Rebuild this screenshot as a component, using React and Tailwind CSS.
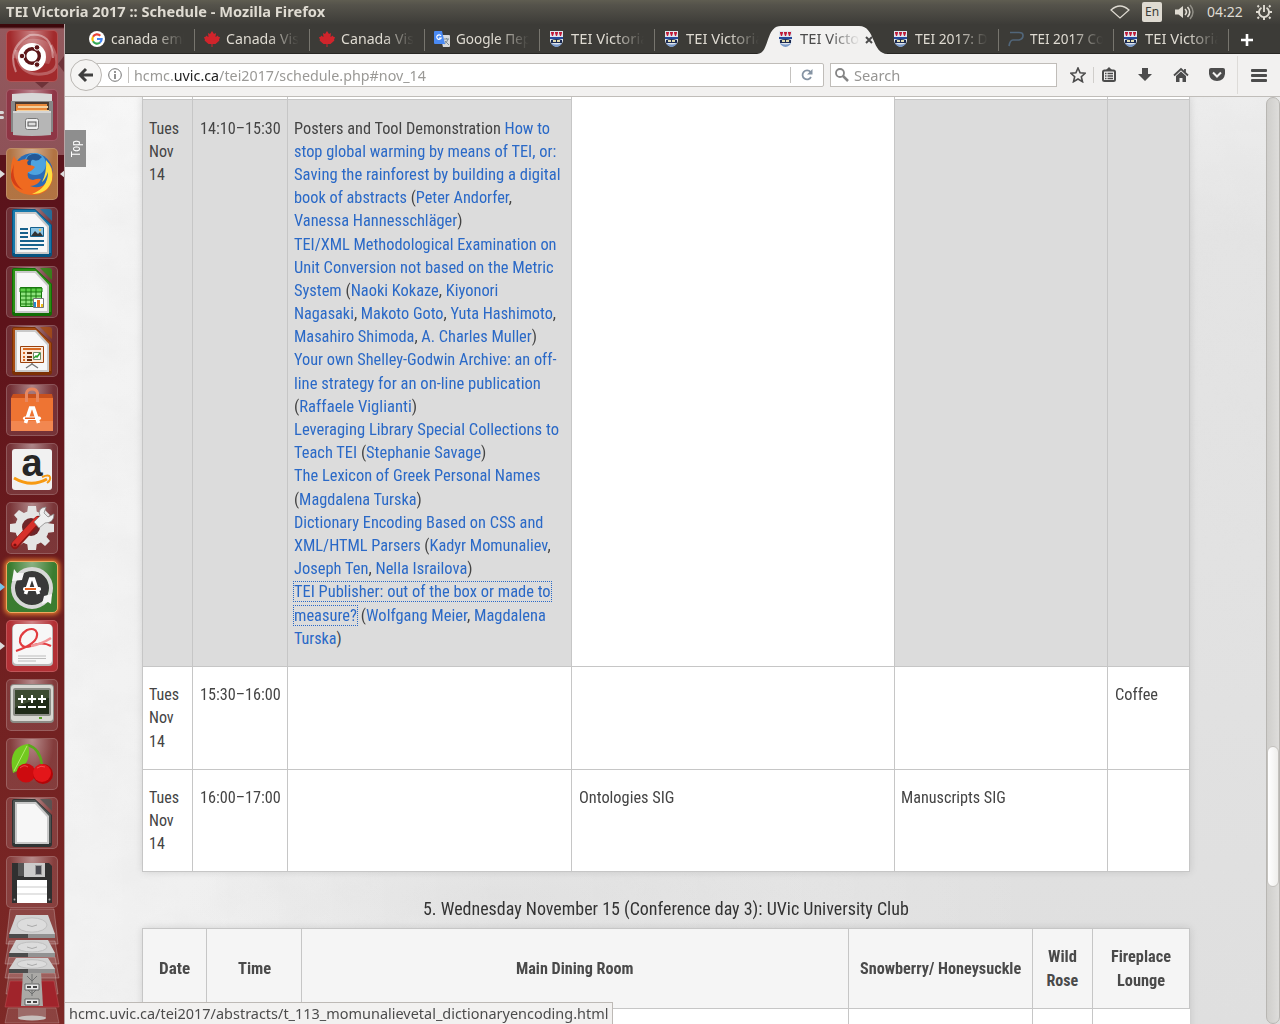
import React, { useLayoutEffect, useRef, useState } from "react";

/* Sets a run of text on one line at a given width. */
function Fit({ w, className = "", children }) {
  const ref = useRef(null);
  const [k, setK] = useState(1);
  useLayoutEffect(() => {
    const n = ref.current.offsetWidth;
    if (n) setK(w / n);
  }, [w]);
  return (
    <span className={"inline-block whitespace-nowrap " + className} style={{ width: w }}>
      <span ref={ref} className="inline-block origin-left" style={{ transform: `scaleX(${k})` }}>
        {children}
      </span>
    </span>
  );
}

/* ---------- launcher ---------- */

function Tile({ tone = "bg-[#ffffff]/10", left, right, glow, children }) {
  return (
    <div className="relative mx-auto h-[52px] w-[52px] shrink-0">
      <div
        className={
          "h-[52px] w-[52px] overflow-hidden rounded-[5px] border " + tone +
          (glow ? " border-[#f0a860] shadow-[0_0_4px_2px_#d9742e]" : " border-[#ffffff]/20")
        }
      >
        <div className="h-full w-full bg-[radial-gradient(ellipse_at_50%_0%,rgba(255,255,255,0.42),rgba(255,255,255,0.02)_62%)]">
          <svg viewBox="1 1 50 50" className="block h-[50px] w-[50px]">{children}</svg>
        </div>
      </div>
      {left && <div className={"absolute top-[22px] -left-[6px] border-y-[4px] border-l-[5px] border-y-transparent " + left} />}
      {right && <div className="absolute top-[22px] -right-[7px] border-y-[4px] border-r-[5px] border-y-transparent border-r-[#dddddd]" />}
    </div>
  );
}

function DocShape({ c, dark, children }) {
  return (
    <g>
      <path d="M6 4q0-2 2-2H29L46 18V47q0 3-3 3H9q-3 0-3-3z" fill={dark} />
      <path d="M7 4q0-1 2-1H29L45 18V46H7z" fill={c} />
      <path d="M34 2H43q3 0 3 3V14z" fill={c} opacity=".8" />
      <path d="M9 5H30L43 19V47H9z" fill="#c9c9c9" />
      <path d="M11 7H29L41 20V45H11z" fill="#f7f7f7" />
      {children}
    </g>
  );
}

function Launcher() {
  return (
    <aside className="flex h-[1000px] w-16 shrink-0 flex-col overflow-hidden bg-[linear-gradient(180deg,#3c070b_0px,#3c070b_3px,#935a5e_5px,#8e5258_131px,#5a131b_131px,#5d131a_300px,#6f1f20_600px,#7d2926_1000px)] pt-[6px]">
      <div className="flex flex-col gap-[7px]">
        <div className="relative">
          <div className="absolute top-[26px] right-0 border-y-[8px] border-r-[6px] border-y-transparent border-r-[#6e3339]" />
          <div className="absolute top-[52px] left-[35px] border-x-[7px] border-t-[6px] border-x-transparent border-t-[#6e3339]" />
          <Tile tone="bg-[#a02628]">
            <path d="M10 42Q0 18 24 5Q46 2 47 28" fill="none" stroke="#fff" strokeOpacity=".4" strokeWidth="2" />
            <path d="M7 28Q10 6 32 9T43 34" fill="#fff" opacity=".18" />
            <path d="M10 20Q12 46 36 44T45 15" fill="none" stroke="#fff" strokeOpacity=".25" strokeWidth="3" />
            <circle cx="26" cy="27" r="14" fill="#fff" />
            <circle cx="26" cy="26" r="7.3" fill="none" stroke="#5c1518" strokeWidth="3.4" />
            <g fill="#5c1518" stroke="#fff" strokeWidth="1">
              <circle cx="16" cy="26" r="2.8" /><circle cx="31" cy="17.4" r="2.8" /><circle cx="31" cy="34.6" r="2.8" />
            </g>
          </Tile>
        </div>
        <div className="relative">
          <div className="absolute top-[22px] left-0 flex flex-col gap-[2px]">
            <i className="block h-[3px] w-1 rounded-r bg-[#d8d8d8]" /><i className="block h-[3px] w-1 rounded-r bg-[#d8d8d8]" />
          </div>
          <Tile tone="bg-[#8a2438]/70">
            <path d="M6 5q20-2 40 0V17H6z" fill="#d8d8d8" /><path d="M5 12H47V43H5z" fill="#878787" />
            <path d="M9 13H43V24H9z" fill="#4b3a30" /><path d="M10 15H41V24H10z" fill="#e8883a" />
            <path d="M12 17H42V19H12zM11 21H43V23H11z" fill="#f4cf9c" />
            <path d="M7 22H45V46q-19 2-38 0z" fill="#b6b6b6" /><path d="M7 22H45V24H7z" fill="#d5d5d5" />
            <rect x="19.500" y="29.500" width="13" height="11" rx="2" fill="#eee" stroke="#777" />
            <rect x="22" y="33" width="8" height="4" fill="#ddd" stroke="#555" />
          </Tile>
        </div>
        <Tile tone="bg-[#b0713f]" left="border-l-[#dddddd]" right>
          <circle cx="27" cy="25" r="20" fill="#2b6cb5" />
          <circle cx="29" cy="16" r="11" fill="#4da3e0" />
          <path d="M22 8q8-5 14 1-4 5-8 3t-3 7q-5 0-6-5z" fill="#225796" />
          <path d="M8 8q2 5 5 5 5-3 10-1-3 2-1 5 5 0 7 2-4 5-7 5-2 7 5 8 5-2 8-1-3 7-11 7 12 4 17-5 5-8 2-18 6 9 3 18-4 14-20 14Q6 46 5 29 4 15 8 8z" fill="#ef6a20" />
          <path d="M40 12q8 8 6 20-4 14-20 14 16-6 16-22-3 8-6 10 5-10 4-22z" fill="#ffdf3f" />
          <path d="M8 16q-3 17 9 26Q4 37 5 26z" fill="#d33f17" />
        </Tile>
        <Tile>
          <DocShape c="#1678ab" dark="#075380">
            <path d="M14 21h8v2h-8zM14 25h8v2h-8zM14 29h8v2h-8zM14 33h24v2H14zM14 37h24v2H14zM14 41h18v1.500H14z" fill="#17618c" />
            <path d="M24.500 20.500h13v9h-13z" fill="#8cc6e6" stroke="#17618c" /><path d="M25 29l4-5 3 3 2-2 3 4z" fill="#333" />
            <circle cx="34" cy="23" r="1.200" fill="#f6c24a" />
          </DocShape>
        </Tile>
        <Tile>
          <DocShape c="#2b8f13" dark="#116d05">
            <path d="M14.500 21.500h21v19h-21z" fill="#8fe37e" stroke="#17790c" />
            <path d="M14 22h22v4H14zM14 30h22M14 34h22M14 38h22M20 21v20M25 21v20M30 21v20" fill="#5ed049" stroke="#17790c" />
            <path d="M27.500 32.500h10v9h-10z" fill="#fff" stroke="#777" />
            <path d="M28 36h2v5h-2z" fill="#2188ce" /><path d="M31 34h3v7h-3z" fill="#e0701c" /><path d="M35 38h2v3h-2z" fill="#f1c21c" />
          </DocShape>
        </Tile>
        <Tile>
          <DocShape c="#a64c13" dark="#7c3004">
            <path d="M14.500 21.500h23v16h-23z" fill="#fbe9d8" stroke="#9c420d" />
            <path d="M17 23h18v2H17z" fill="#d86a22" /><path d="M17 27h2v2h-2zM17 31h2v2h-2zM17 34h2v2h-2z" fill="#d86a22" />
            <path d="M21 27h5v2h-5zM21 31h5v2h-5zM21 34h5v2h-5z" fill="#70300c" />
            <path d="M27.500 27.500h7v7h-7z" fill="#fff" stroke="#6a8a6a" /><path d="M28 33l2-2 1 1 3-4" fill="none" stroke="#27a02a" strokeWidth="1.500" />
            <path d="M26 38v2M26 39l-6 4M26 39l6 4" stroke="#777" strokeWidth="1.500" />
          </DocShape>
        </Tile>
        <Tile>
          <path d="M7 10H46L47 14V47H5V14z" fill="#c8501d" /><path d="M5 14H47V47H5z" fill="#ee7433" />
          <path d="M5 37H47V47H5z" fill="#f28750" />
          <path d="M20.500 18V9q1-4 5.500-4t5.500 4v9" fill="none" stroke="#e8875f" strokeWidth="3" />
          <path d="M19.500 39L24.500 24h3l5 15" fill="none" stroke="#fff" strokeWidth="3.600" />
          <rect x="17" y="32.500" width="18" height="3.500" rx="1.700" fill="#fff" /><path d="M19 34.300h10" stroke="#e56020" strokeWidth="1.500" />
        </Tile>
        <Tile>
          <rect x="6" y="6" width="40" height="41" rx="3" fill="#f1f1f1" />
          <text x="26" y="33" textAnchor="middle" fontFamily="Liberation Sans, sans-serif" fontWeight="700" fontSize="38" fill="#262626">a</text>
          <path d="M8 35q17 10 33 1" fill="none" stroke="#f79a12" strokeWidth="3" /><path d="M36 34q7-3 8 0t-3 6" fill="none" stroke="#f79a12" strokeWidth="2" />
        </Tile>
        <Tile>
          <g fill="#e4e4e4"><circle cx="26" cy="26" r="17" />
            <path d="M22 4h8l1 8H21zM22 48h8l1-8H21zM4 22v8l8 1V21zM48 22v8l-8 1V21zM8 13l5-5 8 5-7 7zM44 39l-5 5-7-6 6-6zM8 39l5 5 8-6-7-6zM44 13l-5-5-8 6 6 6z" /></g>
          <circle cx="25" cy="25" r="9" fill="#6d2529" />
          <path d="M9 43L32 18" stroke="#8f1715" strokeWidth="8" strokeLinecap="round" /><path d="M9 42L31 18" stroke="#d7302b" strokeWidth="6" strokeLinecap="round" />
          <circle cx="9" cy="43" r="1.600" fill="#761010" />
          <path d="M28 20l6-6q-3-8 6-9l-2 6 4 4 6-3q0 9-9 9l-6 5z" fill="#efefef" stroke="#8c8c8c" strokeWidth=".8" />
        </Tile>
        <Tile tone="bg-[#377a2c]" left="border-l-[#76c3ec]" glow>
          <circle cx="26" cy="27" r="17" fill="#393939" />
          <circle cx="26" cy="27" r="19" fill="none" stroke="#d8d8d8" strokeWidth="4" />
          <path d="M6 20L8 8l3 4 7 0-2 7z" fill="#f5f5f5" /><path d="M46 33L45 43l-3-2-6 2 2-8z" fill="#f5f5f5" />
          <path d="M19.500 33L24.500 18h3l5 15" fill="none" stroke="#fff" strokeWidth="3.600" />
          <rect x="17" y="26" width="18" height="4" rx="1.700" fill="#fff" /><path d="M19 28h11" stroke="#e56020" strokeWidth="2" />
        </Tile>
        <Tile tone="bg-[#b12c31]" left="border-l-[#dddddd]">
          <rect x="6" y="5" width="41" height="41" rx="4" fill="#b9b9b9" /><rect x="7" y="4" width="39" height="40" rx="4" fill="#f7f7f7" />
          <path d="M10 31Q33 23 31 13Q29 7 21 10Q13 15 14 22Q16 29 25 26Q36 21 45 26" fill="none" stroke="#e13c40" strokeWidth="2.200" />
          <path d="M25 26q11-2 20-8" fill="none" stroke="#f2979a" strokeWidth="2.500" />
          <path d="M12 36h28M12 38.500h28M12 41h18" stroke="#bdbdbd" />
        </Tile>
        <Tile>
          <rect x="4" y="5" width="44" height="39" rx="4" fill="#8c8c86" /><rect x="5" y="6" width="42" height="36" rx="3" fill="#d8d8d2" />
          <rect x="7" y="9" width="38" height="28" rx="2" fill="#8b8d86" /><rect x="9" y="11" width="34" height="24" fill="#1f2b18" />
          <path d="M9 11h34v8q-17 1-34 10z" fill="#48593b" opacity=".7" />
          <path d="M12 20h8M16 16v8M22 20h8M26 16v8M32 20h8M36 16v8" stroke="#fff" strokeWidth="2" /><path d="M12 28h8M22 28h8M32 28h8" stroke="#fff" strokeWidth="2" />
          <path d="M33 39h3" stroke="#5aa329" strokeWidth="2" />
        </Tile>
        <Tile>
          <path d="M22 7q-8 7-2 22M22 7q13 4 14 22" fill="none" stroke="#5aa81c" strokeWidth="2.500" />
          <path d="M22 6Q1 9 7 35Q27 27 22 6z" fill="#72c91f" /><path d="M21 8L8 33" stroke="#b2ec6b" />
          <circle cx="20" cy="35" r="9.500" fill="#cd0b0f" /><circle cx="37" cy="36" r="10" fill="#b30508" /><circle cx="36" cy="35" r="9" fill="#e3161a" />
          <path d="M14 30q4-4 8-1M31 30q4-3 8-1" fill="none" stroke="#ff7474" strokeWidth="1" opacity=".6" />
        </Tile>
        <Tile><DocShape c="#505554" dark="#303434" /></Tile>
        <Tile>
          <path d="M6 7H43L46 10V47H6z" fill="#303030" /><path d="M18 7H39V21H18z" fill="#cbcbcb" />
          <path d="M12 7h6v13h-6z" fill="#555" /><path d="M29.500 9.500h6v9h-6z" fill="#47484f" stroke="#999" />
          <path d="M11 24H41V47H11z" fill="#fff" /><path d="M11 31h30M11 38h30" stroke="#c9c9c9" />
          <circle cx="8.500" cy="43.500" r="1" fill="#aaa" /><circle cx="43.500" cy="43.500" r="1" fill="#aaa" />
        </Tile>
      </div>
      <svg viewBox="0 908 64 116" className="block h-[116px] w-16 shrink-0">
        <g fill="#fff" fillOpacity=".14" stroke="#fff" strokeOpacity=".25">
          <path d="M10 909H54L58 944H6z" /><path d="M9 941H55L59 964H5z" /><path d="M9 957H55L59 978H5z" /><path d="M9 973H55L58 994H6z" />
        </g>
        <path d="M5 1007L10 981H54L59 1007z" fill="#a0242b" stroke="#c0555a" strokeOpacity=".5" />
        <path d="M8 1008h48l3 15H5z" fill="#fff" fillOpacity=".12" stroke="#fff" strokeOpacity=".2" />
        <path d="M23 972H41L43 1006H21z" fill="#aaa9a6" />
        <path d="M32 974v9M27 976l5 5 5-5M32 990v6M28 990l4 4 4-4" fill="none" stroke="#6f7070" />
        <path d="M25 984h14v6H25zM25 999h14v6H25z" fill="#e8e8e8" stroke="#656565" />
        <path d="M27 986h4v2h-4zM33 986h4v2h-4zM27 1001h4v2h-4zM33 1001h4v2h-4z" fill="#444" />
        <path d="M18 1008H46V1018q-14 4-28 0z" fill="#9c6b68" /><ellipse cx="32" cy="1018" rx="14" ry="2.500" fill="#c7c0bd" />
        {[[915, 20], [940, 14], [958, 12]].map(([y, h]) => (
          <g key={y} transform={`translate(0 ${y})`}>
            <path d={`M16 0H48L55 ${h - 1}H9z`} fill="#d2d2d2" />
            <ellipse cx="32" cy={h / 2} rx="15" ry={h / 2.8} fill="#dcdcdc" stroke="#c0c0c0" />
            <path d={`M27 ${h / 2}q5 3 10 0`} fill="none" stroke="#aaa" />
            <path d={`M9 ${h - 1}H55V${h + 3}H9z`} fill="#4b4b4b" /><path d={`M28 ${h - 1}H55V${h + 3}H28z`} fill="#929292" />
          </g>
        ))}
      </svg>
    </aside>
  );
}

/* ---------- tab strip ---------- */

const Crest = () => (
  <svg viewBox="0 0 16 16" className="h-4 w-4 shrink-0">
    <path d="M1 0H14V10Q13 14 7.500 16Q2 14 1 10z" fill="#dfe5ee" />
    <path d="M2 1h3v1l-1 3H3L2 2zM6 1h3v1L8 5H7L6 2zM10 1h3v1l-1 3h-1l-1-3z" fill="#c01a38" />
    <path d="M1 6H14V8H1z" fill="#26499b" /><path d="M2 9q5.500-2 11 0v3H2z" fill="#1c2b52" />
    <path d="M4 9h3v2H4zM8 9h3v2H8z" fill="#e3dcae" /><path d="M2 12q5.500 3 11 0-1 3-5.500 4-4.500-1-5.500-4z" fill="#7898c8" />
  </svg>
);
const GoogleG = () => (
  <svg viewBox="0 0 16 16" className="h-4 w-4 shrink-0">
    <circle cx="8" cy="8" r="8" fill="#fff" />
    <g fill="none" strokeWidth="2.200">
      <path d="M11.300 4.700A4.600 4.600 0 0 0 4 5.700" stroke="#ea4335" /><path d="M4 5.700A4.600 4.600 0 0 0 4 10.300" stroke="#fbbc05" />
      <path d="M4 10.300A4.600 4.600 0 0 0 11 11.500" stroke="#34a853" /><path d="M11 11.500A4.600 4.600 0 0 0 12.600 8H8" stroke="#4285f4" />
    </g>
  </svg>
);
const Maple = () => (
  <svg viewBox="0 0 16 16" className="h-4 w-4 shrink-0">
    <path d="M8 0l2 3 2-1-.500 4L14 4.500l.500 1.500L16 6l-1 3 .500.500-4 3.500H8.500V16h-1v-3H4.500L.500 9.500 1 9 0 6l1.500 0L2 4.500 4.500 6 4 2l2 1z" fill="#d0242b" />
  </svg>
);
const Translate = () => (
  <svg viewBox="0 0 16 16" className="h-4 w-4 shrink-0">
    <path d="M6 4h9q1 0 1 1v10q0 1-1 1H9z" fill="#d7d9dc" /><path d="M10 8h5M12.500 7v1M14 8q-1 4-4 5M11 10l4 4" stroke="#7d8c94" fill="none" />
    <path d="M1 0h7l3 13H1q-1 0-1-1V1q0-1 1-1z" fill="#4a8af4" />
    <path d="M7 4.800A2.300 2.300 0 1 0 7.200 7H5" fill="none" stroke="#fff" strokeWidth="1.200" />
  </svg>
);
const PMark = () => (
  <svg viewBox="0 0 16 16" className="h-4 w-4 shrink-0">
    <path d="M1 15Q2 9 5 9H11Q15 8 15 4.500 15 1.500 11 1.500H2" fill="none" stroke="#51667a" strokeWidth="1.700" />
  </svg>
);

const tabs = [
  [GoogleG, "canada emba", 88], [Maple, "Canada Visa", 81], [Maple, "Canada Visa", 81], [Translate, "Google Перев", 90],
  [Crest, "TEI Victoria", 77], [Crest, "TEI Victoria", 77], [Crest, "TEI Victoria", 77, true], [Crest, "TEI 2017: Dis", 83],
  [PMark, "TEI 2017 Con", 83], [Crest, "TEI Victoria", 77],
];

function TabStrip() {
  return (
    <div className="flex h-[30px] items-stretch border-b border-[#282724] bg-[#3c3b37] pl-[15px] text-[14px]">
      {tabs.map(([Icon, label, w, active], i) => (
        <div key={i} className={"relative flex w-[115px] shrink-0 items-center pl-[9px]" + (active ? " -ml-px" : "")}>
          {active && (
            <svg viewBox="0 0 142 28" className="absolute top-[2px] -left-[12px] h-7 w-[142px]">
              <path d="M0 28C13 28 8 0 24 0H102C119 0 114 28 131 28z" fill="#f2f1f0" />
            </svg>
          )}
          <div className="relative flex items-center gap-[6px]">
            <Icon />
            <div className={"overflow-hidden leading-[20px] " + (active ? "w-[60px] text-[#4c4c4c] [mask-image:linear-gradient(90deg,#000_50%,transparent)]" : "w-[73px] text-[#dfdbd2] [mask-image:linear-gradient(90deg,#000_58%,transparent)]")}>
              <Fit w={w}>{label}</Fit>
            </div>
          </div>
          {active ? (
            <svg viewBox="0 0 8 8" className="absolute top-[12px] right-[11px] h-2 w-2"><path d="M1 1l6 6M7 1L1 7" stroke="#4c4c4c" strokeWidth="2" /></svg>
          ) : (
            i !== 5 && <div className="absolute top-[5px] right-0 h-[22px] w-px bg-[#77756e]" />
          )}
        </div>
      ))}
      <svg viewBox="0 0 14 14" className="mt-[9px] ml-[11px] h-[14px] w-[14px]"><path d="M7 1v12M1 7h12" stroke="#fff" strokeWidth="2.600" /></svg>
    </div>
  );
}

function Toolbar() {
  return (
    <div className="flex h-[43px] items-center border-b border-[#c0bdb9] bg-[#f2f1f0] pl-[5px]">
      <div className="relative z-10 flex h-[32px] w-[32px] shrink-0 items-center justify-center rounded-full border border-[#bab7b3] bg-[#f5f4f3]">
        <svg viewBox="0 0 16 16" className="h-4 w-4"><path d="M15 8H3M8 2L2 8l6 6" fill="none" stroke="#3f3f3f" strokeWidth="3" /></svg>
      </div>
      <div className="-ml-[6px] flex h-6 w-[728px] shrink-0 items-center rounded-r-[2px] border border-[#c0bdb9] bg-white">
        <svg viewBox="0 0 14 14" className="ml-[11px] h-[14px] w-[14px]">
          <circle cx="7" cy="7" r="6.300" fill="none" stroke="#737373" /><path d="M7 6v5" stroke="#737373" strokeWidth="1.600" /><circle cx="7" cy="4" r="1" fill="#737373" />
        </svg>
        <div className="ml-[6px] h-4 w-px bg-[#c4c2bf]" />
        <Fit w={292} className="ml-[5px] pt-px text-[14px] leading-[22px] text-[#9a9996]">hcmc.<span className="text-[#222222]">uvic.ca</span>/tei2017/schedule.php#nov_14</Fit>
        <div className="ml-auto h-4 w-px bg-[#c4c2bf]" />
        <svg viewBox="0 0 12 12" className="mr-[10px] ml-[10px] h-3 w-3">
          <path d="M9.500 3A4.500 4.500 0 1 0 10 8" fill="none" stroke="#8593a3" strokeWidth="1.800" /><path d="M11.500 0v5.500H6z" fill="#8593a3" />
        </svg>
      </div>
      <div className="ml-[6px] flex h-6 w-[227px] shrink-0 items-center border border-[#c0bdb9] bg-white">
        <svg viewBox="0 0 14 14" className="ml-1 h-[14px] w-[14px]"><circle cx="5" cy="5" r="4" fill="none" stroke="#858585" strokeWidth="1.800" /><path d="M8 8l5 5" stroke="#858585" strokeWidth="2.500" /></svg>
        <Fit w={46} className="ml-[5px] pt-px text-[14px] leading-[22px] text-[#969593]">Search</Fit>
      </div>
      <svg viewBox="0 0 16 16" className="ml-[13px] h-4 w-4 shrink-0"><path d="M8 1l2.100 4.800 5 .5-3.800 3.400 1.200 5L8 12l-4.500 2.700 1.200-5L.9 6.300l5-.5z" fill="none" stroke="#4c4c4c" strokeWidth="1.600" /></svg>
      <div className="ml-[7px] h-4 w-px bg-[#d0cecb]" />
      <svg viewBox="0 0 16 16" className="ml-[7px] h-4 w-4 shrink-0"><path d="M8 0l3 3H5z" fill="#4c4c4c" /><rect x="2" y="3.500" width="12" height="10.500" rx="1.500" fill="none" stroke="#4c4c4c" strokeWidth="2" /><path d="M4 6.500h1.500M6.500 6.500H12M4 9h1.500M6.500 9H12M4 11.500h1.500M6.500 11.500H12" stroke="#4c4c4c" strokeWidth="1.300" /></svg>
      <svg viewBox="0 0 16 16" className="ml-[20px] h-4 w-4 shrink-0"><path d="M5 1h6v6h4l-7 7-7-7h4z" fill="#4c4c4c" /></svg>
      <svg viewBox="0 0 16 16" className="ml-[20px] h-4 w-4 shrink-0"><path d="M1 8.500L8 2l7 6.500M12 2v4" fill="none" stroke="#4c4c4c" strokeWidth="1.800" /><path d="M3 9l5-4.500L13 9v6H9.500v-4h-3v4H3z" fill="#4c4c4c" /></svg>
      <svg viewBox="0 0 16 16" className="ml-[20px] h-4 w-4 shrink-0"><path d="M2 1h12q2 0 2 2v4q-1 7-8 7T0 7V3q0-2 2-2z" fill="#4c4c4c" /><path d="M4 5.500l4 4 4-4" fill="none" stroke="#f2f1f0" strokeWidth="2" /></svg>
      <div className="ml-[12px] h-[38px] w-px bg-[#dddbd8]" />
      <svg viewBox="0 0 16 16" className="ml-[13px] h-4 w-4 shrink-0"><path d="M1 3.500h14M1 8.500h14M1 13.500h14" stroke="#4c4c4c" strokeWidth="2.800" strokeLinecap="round" /></svg>
    </div>
  );
}

/* ---------- schedule page ---------- */

const L = ({ children }) => <span className="text-[#2a69c7]">{children}</span>;

const posters = [
  [256, <>Posters and Tool Demonstration <L>How to</L></>],
  [262, <L>stop global warming by means of TEI, or:</L>],
  [267, <L>Saving the rainforest by building a digital</L>],
  [218, <><L>book of abstracts</L> (<L>Peter Andorfer</L>,</>],
  [168, <><L>Vanessa Hannesschläger</L>)</>],
  [263, <L>TEI/XML Methodological Examination on</L>],
  [260, <L>Unit Conversion not based on the Metric</L>],
  [204, <><L>System</L> (<L>Naoki Kokaze</L>, <L>Kiyonori</L></>],
  [262, <><L>Nagasaki</L>, <L>Makoto Goto</L>, <L>Yuta Hashimoto</L>,</>],
  [243, <><L>Masahiro Shimoda</L>, <L>A. Charles Muller</L>)</>],
  [262, <L>Your own Shelley-Godwin Archive: an off-</L>],
  [247, <L>line strategy for an on-line publication</L>],
  [123, <>(<L>Raffaele Viglianti</L>)</>],
  [265, <L>Leveraging Library Special Collections to</L>],
  [192, <><L>Teach TEI</L> (<L>Stephanie Savage</L>)</>],
  [246, <L>The Lexicon of Greek Personal Names</L>],
  [128, <>(<L>Magdalena Turska</L>)</>],
  [249, <L>Dictionary Encoding Based on CSS and</L>],
  [257, <><L>XML/HTML Parsers</L> (<L>Kadyr Momunaliev</L>,</>],
  [179, <><L>Joseph Ten</L>, <L>Nella Israilova</L>)</>],
  [257, <L>TEI Publisher: out of the box or made to</L>, 259],
  [252, <><L>measure?</L> (<L>Wolfgang Meier</L>, <L>Magdalena</L></>, 65],
  [47, <><L>Turska</L>)</>],
];

const When = () => (
  <div className="flex flex-col items-start">
    <Fit w={30}>Tues</Fit><Fit w={25}>Nov</Fit><Fit w={16}>14</Fit>
  </div>
);

const Cell = ({ top = "pt-4", left = "pl-[6px]", className = "", children }) => (
  <div className={`border-r border-b border-[#c6c6c6] leading-[23.2px] ${top} ${left} ${className}`}>{children}</div>
);

/* Faint mottled haze over the page backdrop. */
const Haze = () => (
  <svg className="absolute inset-0 h-full w-full opacity-20">
    <filter id="haze"><feTurbulence type="fractalNoise" baseFrequency="0.02 0.03" numOctaves="4" seed="4" /><feColorMatrix values="0 0 0 0 0.75  0 0 0 0 0.75  0 0 0 0 0.75  1.8 0 0 0 -0.6" /></filter>
    <rect width="100%" height="100%" filter="url(#haze)" />
  </svg>
);

function Page() {
  const g = "bg-[#dcdcdc]";
  const th = "flex flex-col items-center justify-center border-r border-b border-[#c6c6c6] bg-[#f5f5f5] leading-[24px]";
  return (
    <div className="relative flex h-[927px] overflow-hidden bg-[radial-gradient(ellipse_320px_70px_at_440px_800px,rgba(190,190,190,0.2),transparent),linear-gradient(90deg,rgba(255,255,255,0.6)_0%,rgba(255,255,255,0)_80%),linear-gradient(180deg,#ededed,#e4e4e4_15%,#dfdfdf)]">
      <Haze />
      <div className="relative ml-[77px] flex w-[1048px] flex-col text-[16px] text-[#444444] [font-family:Roboto,sans-serif] [font-stretch:75%]">
        <div className="grid shrink-0 grid-cols-[50px_95px_284px_323px_213px_82px] grid-rows-[3px_567px_103px_102px] border-l border-[#c6c6c6] bg-white shadow-[0_0_8px_rgba(0,0,0,0.12)]">
          {[0, 1, 2].map((i) => <div key={i} className="border-r border-b border-[#c6c6c6]" />)}
          <div className="border-r border-[#c6c6c6]" />
          {[4, 5].map((i) => <div key={i} className="border-r border-b border-[#c6c6c6]" />)}
          <Cell top="pt-[17px]" className={g}><When /></Cell>
          <Cell top="pt-[17px]" left="pl-[7px]" className={g}><Fit w={81}>14:10–15:30</Fit></Cell>
          <Cell top="pt-[16.6px]" className={g}>
            {posters.map(([w, t, box], i) => (
              <div key={i} className="relative h-[23.2px] whitespace-nowrap">
                <Fit w={w}>{t}</Fit>
                {box && <div className="absolute top-px -left-px h-[21px] border border-dotted border-[#2a69c7]" style={{ width: box }} />}
              </div>
            ))}
          </Cell>
          <Cell /><Cell className={g} /><Cell className={g} />
          <Cell top="pt-[16.2px]"><When /></Cell>
          <Cell left="pl-[7px]"><Fit w={81}>15:30–16:00</Fit></Cell>
          <Cell /><Cell /><Cell />
          <Cell left="pl-[7px]"><Fit w={43}>Coffee</Fit></Cell>
          <Cell><When /></Cell>
          <Cell left="pl-[7px]"><Fit w={81}>16:00–17:00</Fit></Cell>
          <Cell />
          <Cell left="pl-[7px]"><Fit w={95}>Ontologies SIG</Fit></Cell>
          <Cell><Fit w={105}>Manuscripts SIG</Fit></Cell>
          <Cell />
        </div>
        <div className="flex h-14 shrink-0 items-center justify-center pt-4 text-[18px] text-[#333333]">
          <Fit w={486}>5. Wednesday November 15 (Conference day 3): UVic University Club</Fit>
        </div>
        <div className="grid shrink-0 grid-cols-[64px_95px_547px_184px_60px_97px] grid-rows-[80px_40px] border-t border-l border-[#c6c6c6] bg-white font-bold text-[#4a4a4a] shadow-[0_0_8px_rgba(0,0,0,0.12)]">
          <div className={th}><Fit w={31}>Date</Fit></div>
          <div className={th}><Fit w={33}>Time</Fit></div>
          <div className={th}><Fit w={118}>Main Dining Room</Fit></div>
          <div className={th}><Fit w={161}>Snowberry/ Honeysuckle</Fit></div>
          <div className={th}><Fit w={29}>Wild</Fit><Fit w={32}>Rose</Fit></div>
          <div className={th}><Fit w={60}>Fireplace</Fit><Fit w={48}>Lounge</Fit></div>
          {[0, 1, 2, 3, 4].map((i) => <div key={i} className="border-r border-[#c6c6c6]" />)}
        </div>
      </div>
      <div className="relative ml-auto h-full w-[14px] rounded-full border border-[#b8b6b2] bg-[linear-gradient(90deg,#cfcecb,#dedddb)]">
        <div className="mt-[648px] h-[141px] rounded-full border border-[#c4c2be] bg-[linear-gradient(90deg,#ffffff,#efeeec)]" />
      </div>
      <div className="absolute top-[33px] left-0 flex h-[37px] w-[21px] items-center justify-center bg-[#8e8e8e] text-[13px] text-white [font-family:Roboto,sans-serif] [font-stretch:75%]">
        <div className="-rotate-90"><Fit w={17}>Top</Fit></div>
      </div>
      <div className="absolute bottom-0 left-0 flex h-[22px] w-[548px] items-center border-t border-r border-[#bdb9b5] bg-[#f2f1f0] pl-1 text-[14px] text-[#4c4c4c]">
        <Fit w={539}>hcmc.uvic.ca/tei2017/abstracts/t_113_momunalievetal_dictionaryencoding.html</Fit>
      </div>
    </div>
  );
}

export default function App() {
  return (
    <div className="flex h-[1024px] w-[1280px] flex-col overflow-hidden bg-[#3c3b37] [font-family:'Noto_Sans',sans-serif]">
      <header className="flex h-6 shrink-0 items-center bg-[linear-gradient(180deg,#5f5d51,#55534b_20%,#3d3c38)] pl-[6px] text-[#dfdbd2]">
        <Fit w={319} className="text-[14px] leading-[22px] font-bold">TEI Victoria 2017 :: Schedule - Mozilla Firefox</Fit>
        <svg viewBox="0 0 20 14" className="ml-auto h-[14px] w-5"><path d="M1 5Q10-3 19 5L10 13z" fill="none" stroke="#dfdbd2" strokeWidth="1.200" /></svg>
        <div className="ml-[12px] flex h-5 w-5 items-center justify-center rounded-[2px] bg-[#dfdbd2] text-[12px] text-[#3c3b37]"><Fit w={14}>En</Fit></div>
        <svg viewBox="0 0 20 16" className="ml-[12px] h-4 w-5">
          <path d="M1 5.500h3.500L9 2v12L4.500 10.500H1z" fill="#dfdbd2" /><path d="M11 5q3 3 0 6M13.500 3q4.500 5 0 10" fill="none" stroke="#dfdbd2" strokeWidth="1.600" /><path d="M16 1q6 7 0 14" fill="none" stroke="#908e86" strokeWidth="1.500" />
        </svg>
        <Fit w={36} className="ml-[13px] text-[14px] leading-[22px]">04:22</Fit>
        <svg viewBox="0 0 18 18" className="mr-[7px] ml-[12px] h-[18px] w-[18px]">
          <path d="M6.500 4.800a5 5 0 1 0 5 0M9 2v7" fill="none" stroke="#dfdbd2" strokeWidth="1.900" />
          <path d="M4 4L2.500 2.500M14 4l1.500-1.500M1 9h3M14 9h3M4 14l-1.500 1.500M14 14l1.500 1.500M9 14v3" stroke="#dfdbd2" strokeWidth="2" />
        </svg>
      </header>
      <div className="flex">
        <Launcher />
        <div className="h-[1000px] w-px shrink-0 bg-[#b9a5a5]" />
        <main className="min-w-0 flex-1">
          <TabStrip />
          <Toolbar />
          <Page />
        </main>
      </div>
    </div>
  );
}
